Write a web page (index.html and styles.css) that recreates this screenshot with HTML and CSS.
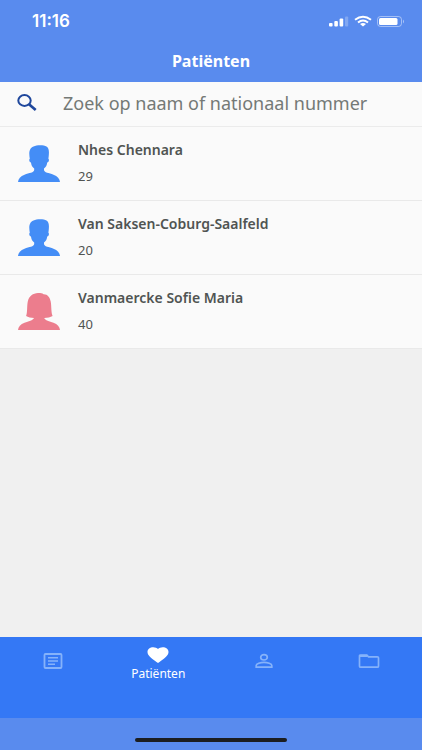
FILE: index.html
```html
<!DOCTYPE html>
<html lang="nl">
<head>
<meta charset="utf-8">
<meta name="viewport" content="width=device-width, initial-scale=1">
<title>Patiënten</title>
<link rel="stylesheet" href="styles.css">
</head>
<body>
<div class="app">
  <header class="header">
    <div class="status">
      <span class="clock">11:16</span>
      <span class="indicators">
        <svg width="20" height="12" viewBox="0 0 20 12" fill="#fff" aria-hidden="true">
          <rect x="0" y="8" width="3.600" height="3.500" rx="1"/>
          <rect x="5.300" y="6" width="3.600" height="5.500" rx="1"/>
          <rect x="10.600" y="3.500" width="3.600" height="8" rx="1"/>
          <rect x="16" y="1.500" width="3.200" height="10" rx="1" opacity=".25"/>
        </svg>
        <svg width="18" height="12" viewBox="0 0 18 12" fill="none" stroke="#fff" stroke-width="2" aria-hidden="true">
          <path d="M1 4.700Q9-1.300 17 4.700M4 7.500Q9 3.500 14 7.500"/>
          <path d="M6 9Q9 7 12 9L9 11.500Z" fill="#fff" stroke="none"/>
        </svg>
        <svg width="29" height="12" viewBox="0 0 29 12" aria-hidden="true">
          <rect x=".5" y="1.500" width="24" height="10" rx="3" fill="none" stroke="#fff" stroke-opacity=".45"/>
          <rect x="2" y="3" width="18.500" height="7" rx="1.500" fill="#fff"/>
          <path d="M26 4.500Q28 6.500 26 8.500Z" fill="#fff" opacity=".5"/>
        </svg>
      </span>
    </div>
    <h1 class="title">Patiënten</h1>
  </header>

  <main class="content">
    <form class="search" role="search">
      <label class="search-label" for="q" aria-label="Zoeken">
        <svg width="20" height="18" viewBox="0 0 20 18" fill="none" stroke="#1f479c" aria-hidden="true">
          <ellipse cx="7.500" cy="6.500" rx="6.200" ry="5.400" stroke-width="2"/>
          <path d="M12 10.200L18.700 16" stroke-width="2.700"/>
        </svg>
      </label>
      <input class="search-input" id="q" type="search" placeholder="Zoek op naam of nationaal nummer">
    </form>

    <ul class="patients">
      <li><a class="patient" href="#nhes">
        <svg class="avatar male" viewBox="0 0 42 37" aria-hidden="true"><path d="M0 37C.3 33.500 2.500 31.200 6.500 29.700C11 28 16.200 27.500 16.200 25V23.500C14.200 22 13.200 20 13 17.500C11.600 17.500 10.600 14.500 11.800 13.700C11 9 10.500 3.500 15.500 1.500C19-.3 26-.2 28.500 1.600C31.800 3.500 31 9.500 30.400 13.700C31.600 14.500 30.600 17.500 29.200 17.500C29 20 28 22 26 23.500V25C26 27.500 31 28 35.500 29.700C39.500 31.200 41.700 33.500 42 37Z"/></svg>
        <span class="details"><strong class="name">Nhes Chennara</strong><span class="age">29</span></span>
      </a></li>
      <li><a class="patient" href="#van">
        <svg class="avatar male" viewBox="0 0 42 37" aria-hidden="true"><path d="M0 37C.3 33.500 2.500 31.200 6.500 29.700C11 28 16.200 27.500 16.200 25V23.500C14.200 22 13.200 20 13 17.500C11.600 17.500 10.600 14.500 11.800 13.700C11 9 10.500 3.500 15.500 1.500C19-.3 26-.2 28.500 1.600C31.800 3.500 31 9.500 30.400 13.700C31.600 14.500 30.600 17.500 29.200 17.500C29 20 28 22 26 23.500V25C26 27.500 31 28 35.500 29.700C39.500 31.200 41.700 33.500 42 37Z"/></svg>
        <span class="details"><strong class="name">Van Saksen-Coburg-Saalfeld</strong><span class="age">20</span></span>
      </a></li>
      <li><a class="patient" href="#sofie">
        <svg class="avatar female" viewBox="0 0 42 37" aria-hidden="true"><path d="M0 37C.3 33.500 2.500 31.200 6.500 29.700C10.500 28.200 15 27.500 16 25C13 24.800 10 24.300 8.100 23C9.600 19.500 8.800 13 9.800 8.500C11 3 15 .4 20 .1C22 0 24.300 .3 25.500 1.200C29.500 1 32 4.500 32.700 8.500C33.600 13 33 19.500 34.600 23C32.500 24.300 29.500 24.800 26.200 25C27 27.500 31.500 28.200 35.500 29.700C39.500 31.200 41.700 33.500 42 37Z"/></svg>
        <span class="details"><strong class="name">Vanmaercke Sofie Maria</strong><span class="age">40</span></span>
      </a></li>
    </ul>
  </main>

  <nav class="tabs" aria-label="Hoofdmenu">
    <a class="tab" href="#nieuws" aria-label="Nieuws">
      <svg width="20" height="16" viewBox="0 0 20 16" fill="none" stroke="currentColor" aria-hidden="true">
        <rect x="1.500" y="1" width="17" height="14" rx="1" stroke-width="1.800"/>
        <path d="M5 4.700H15M5 8H15M5 11.300H12" stroke-width="1.500"/>
      </svg>
    </a>
    <a class="tab active" href="#patienten" aria-current="page">
      <svg width="22" height="16" viewBox="0 0 22 16" fill="currentColor" aria-hidden="true"><path d="M11 16L9.500 14.900C4 10.800 .5 8.200 .5 4.900C.5 2.200 3 .2 6.300 .2C8.200 .2 9.900 .9 11 2.100C12.100 .9 13.800 .2 15.700 .2C19 .2 21.500 2.200 21.500 4.900C21.500 8.200 18 10.800 12.500 14.900Z"/></svg>
      <span>Patiënten</span>
    </a>
    <a class="tab" href="#profiel" aria-label="Profiel">
      <svg width="18" height="16" viewBox="0 0 18 16" fill="none" stroke="currentColor" stroke-width="1.700" aria-hidden="true">
        <ellipse cx="9" cy="4.300" rx="3.300" ry="2.700"/>
        <path d="M1.200 14.200V12.500C1.200 10.700 5.500 9.400 9 9.400S16.800 10.700 16.800 12.500V14.200Z"/>
      </svg>
    </a>
    <a class="tab" href="#dossiers" aria-label="Dossiers">
      <svg width="22" height="16" viewBox="0 0 22 16" fill="none" stroke="currentColor" stroke-width="1.700" aria-hidden="true">
        <path d="M1.500 3V13.200Q1.500 14.200 2.800 14.200H19.200Q20.500 14.200 20.500 13.200V4.800Q20.500 3.800 19.200 3.800H10.500L8.800 2H2.800Q1.500 2 1.500 3Z"/>
        <path d="M2 2.900H9.500" stroke-width="2.200"/>
      </svg>
    </a>
  </nav>
  <div class="home"><span class="home-bar"></span></div>
</div>
</body>
</html>
```

FILE: styles.css
```css
* {
  box-sizing: border-box;
}

body {
  margin: 0;
  font-family: "Noto Sans", sans-serif;
  color: #505452;
  background: #f0f0f0;
}

.app {
  display: flex;
  flex-direction: column;
  min-height: 100vh;
}

.header {
  padding-top: 11px;
  padding-bottom: 10px;
  color: #fff;
  background: #598bee;
}

.status {
  display: flex;
  align-items: center;
  justify-content: space-between;
  padding: 0 16px 0 32px;
  line-height: 20px;
}

.clock {
  font-family: Inter, sans-serif;
  font-size: 17px;
  font-weight: 600;
}

.indicators {
  display: flex;
  gap: 5px;
}

.title {
  margin: 19px 0 0;
  font-size: 16px;
  font-weight: 700;
  line-height: 22px;
  text-align: center;
}

.content {
  flex: 1;
}

.search {
  display: flex;
  align-items: center;
  height: 45px;
  padding: 0 0 2px 17px;
  background: #fafafa;
  border-bottom: 1px solid #ebebeb;
}

.search-label {
  display: flex;
  margin-right: 26px;
}

.search-input {
  flex: 1;
  min-width: 0;
  padding: 0;
  border: 0;
  outline: 0;
  background: transparent;
  color: #505452;
  font-family: inherit;
  font-size: 18px;
  line-height: 24px;
}

.search-input::placeholder {
  color: #747976;
  opacity: 1;
}

.patients {
  margin: 0;
  padding: 0;
  list-style: none;
}

.patient {
  display: flex;
  gap: 18px;
  height: 74px;
  padding: 13px 18px 0;
  color: inherit;
  text-decoration: none;
  background: #fafafa;
  border-bottom: 1px solid #e9e9e9;
}

.avatar {
  flex: none;
  width: 42px;
  height: 37px;
  margin-top: 5px;
}

.male {
  fill: #448df6;
}

.female {
  fill: #ec7d8d;
}

.details {
  display: flex;
  flex-direction: column;
  gap: 6px;
  line-height: 20px;
}

.name {
  font-size: 14px;
  font-weight: 600;
}

.age {
  font-size: 13px;
}

.tabs {
  display: grid;
  grid-template-columns: repeat(4, 1fr);
  height: 81px;
  background: #3478f5;
}

.tab {
  display: flex;
  flex-direction: column;
  align-items: center;
  padding-top: 16px;
  color: #85b2fa;
  font-size: 12px;
  line-height: 16px;
  text-decoration: none;
}

.active {
  gap: 3px;
  padding-top: 10px;
  color: #fff;
}

.home {
  display: flex;
  justify-content: center;
  height: 32px;
  padding-top: 20px;
  background: #598bee;
}

.home-bar {
  width: 36%;
  height: 4px;
  border-radius: 2px;
  background: #1c1e20;
}
```
